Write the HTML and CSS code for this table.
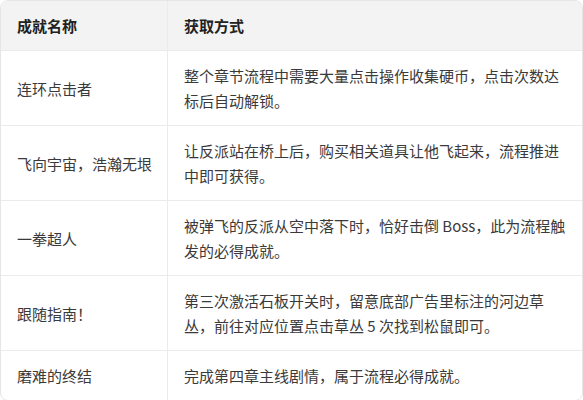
FILE: index.html
```html
<!DOCTYPE html>
<html lang="zh-CN">
<head>
<meta charset="utf-8">
<title>成就列表</title>
<link rel="stylesheet" href="styles.css">
</head>
<body>
<div class="table-wrap">
  <table class="ach">
    <thead>
      <tr><th class="col-name">成就名称</th><th>获取方式</th></tr>
    </thead>
    <tbody>
      <tr><td>连环点击者</td><td>整个章节流程中需要大量点击操作收集硬币，点击次数达<br>标后自动解锁。</td></tr>
      <tr><td>飞向宇宙，浩瀚无垠</td><td>让反派站在桥上后，购买相关道具让他飞起来，流程推进<br>中即可获得。</td></tr>
      <tr><td>一拳超人</td><td>被弹飞的反派从空中落下时，恰好击倒 Boss，此为流程触<br>发的必得成就。</td></tr>
      <tr><td>跟随指南！</td><td>第三次激活石板开关时，留意底部广告里标注的河边草<br>丛，前往对应位置点击草丛 5 次找到松鼠即可。</td></tr>
      <tr><td>磨难的终结</td><td>完成第四章主线剧情，属于流程必得成就。</td></tr>
    </tbody>
  </table>
</div>
</body>
</html>
```

FILE: styles.css
```css
html, body {
  margin: 0;
  padding: 0;
  background: #ffffff;
}

body {
  font-family: "Noto Sans CJK SC", "Noto Sans", sans-serif;
  color: #3a3a3a;
}

.table-wrap {
  width: 583px;
  box-sizing: border-box;
  border: 1px solid #e6e6e6;
  border-radius: 8px;
  overflow: hidden;
}

.ach {
  width: 100%;
  border-collapse: collapse;
  table-layout: fixed;
}

.ach th,
.ach td {
  padding: 12px 12px 12px 16px;
  font-size: 15px;
  line-height: 25px;
  text-align: left;
  vertical-align: middle;
  white-space: nowrap;
  border-bottom: 1px solid #ebebeb;
}

.ach th + th,
.ach td + td {
  border-left: 1px solid #ebebeb;
}

.ach th {
  background: #f3f3f3;
  font-weight: 700;
  color: #222222;
}

.ach .col-name {
  width: 138px;
}

.ach tbody tr:last-child td {
  border-bottom: none;
}
```
